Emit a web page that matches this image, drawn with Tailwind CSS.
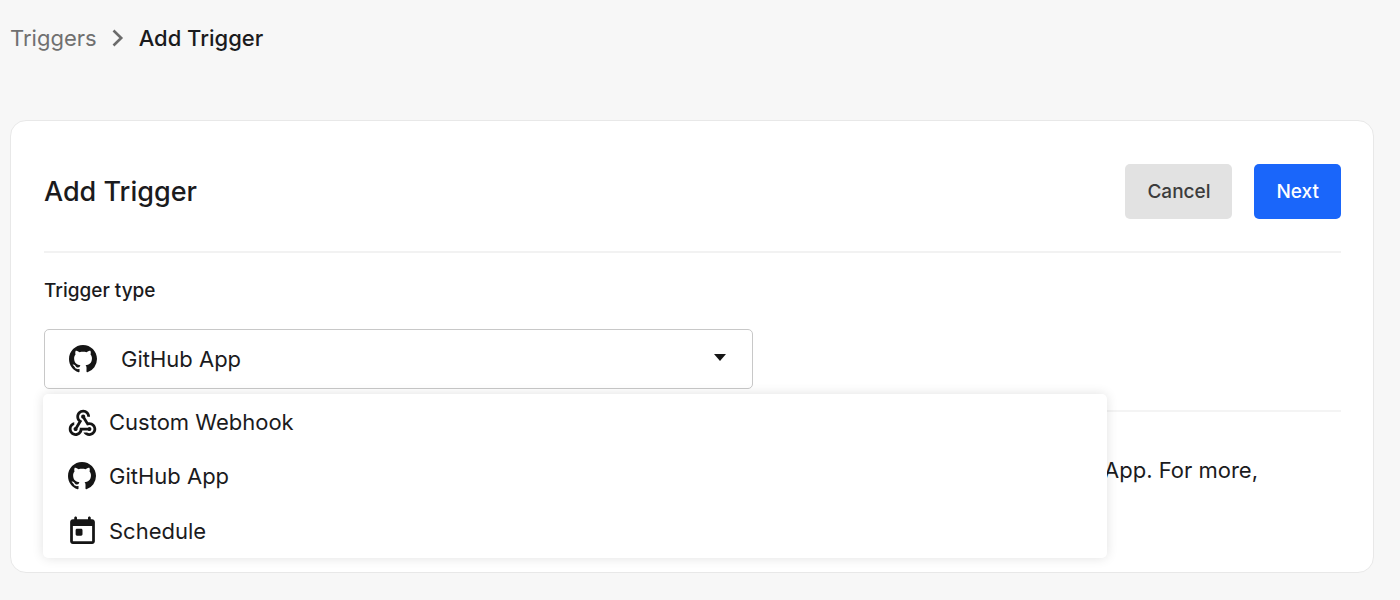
<!DOCTYPE html>
<html lang="en">
<head>
<meta charset="utf-8">
<meta name="viewport" content="width=device-width, initial-scale=1">
<title>Add Trigger</title>
<script src="https://cdn.jsdelivr.net/npm/@tailwindcss/browser@4"></script>
</head>
<body class="min-h-screen bg-[#f7f7f7] font-['Inter',sans-serif] text-[22px] leading-8 text-[#1b1b1d]">
<svg class="hidden" aria-hidden="true">
  <symbol id="github" viewBox="0 0 16 16"><path d="M8 0C3.58 0 0 3.58 0 8c0 3.54 2.29 6.53 5.47 7.59.4.07.55-.17.55-.38 0-.19-.01-.82-.01-1.49-2.01.37-2.53-.49-2.69-.94-.09-.23-.48-.94-.82-1.13-.28-.15-.68-.52-.01-.53.63-.01 1.08.58 1.23.82.72 1.21 1.87.87 2.33.66.07-.52.28-.87.51-1.07-1.78-.2-3.64-.89-3.64-3.95 0-.87.31-1.59.82-2.15-.08-.2-.36-1.02.08-2.12 0 0 .67-.21 2.2.82.64-.18 1.32-.27 2-.27s1.36.09 2 .27c1.53-1.04 2.2-.82 2.2-.82.44 1.1.16 1.92.08 2.12.51.56.82 1.27.82 2.15 0 3.07-1.87 3.75-3.65 3.95.29.25.54.73.54 1.48 0 1.07-.01 1.93-.01 2.2 0 .21.15.46.55.38A8.01 8.01 0 0 0 16 8c0-4.42-3.58-8-8-8z"/></symbol>
</svg>

<nav aria-label="Breadcrumb" class="px-[10px] pt-[22px]">
  <ol class="flex items-center">
    <li><a href="#" class="text-[#707070]">Triggers</a></li>
    <li aria-hidden="true" class="mx-[15px]"><svg class="h-5 w-3" viewBox="0 0 12 20" fill="none" stroke="#6b6b6b" stroke-width="2.6"><path d="M1.5 2.5 9.2 10 1.5 17.5"/></svg></li>
    <li aria-current="page" class="font-medium">Add Trigger</li>
  </ol>
</nav>

<main class="mt-[66px] mr-[26px] mb-7 ml-[10px] rounded-2xl border border-[#e8e8e8] bg-white px-8 pb-[86px] pl-[33px]">
  <header class="flex items-center justify-between border-b-2 border-[#f2f2f2] pt-[43px] pb-8">
    <h1 class="text-[27px] font-medium">Add Trigger</h1>
    <div class="flex gap-[22px]">
      <button type="button" class="h-[55px] rounded-[5px] bg-[#e2e2e2] px-[22px] text-[19px] font-medium text-[#3c3c3c]">Cancel</button>
      <button type="button" class="h-[55px] rounded-[5px] bg-[#1a66fa] px-[22px] text-[19px] font-medium text-white">Next</button>
    </div>
  </header>

  <section class="relative border-b-2 border-[#f4f4f4] pt-[22px] pb-[21px]">
    <label for="type" class="block text-[19px] font-medium">Trigger type</label>
    <div class="relative mt-[22px] max-w-[709px]">
      <select id="type" class="block h-[60px] w-full appearance-none rounded-[5px] border border-[#c8c8c8] bg-white pr-14 pl-[76px]">
        <option>GitHub App</option>
      </select>
      <svg class="pointer-events-none absolute top-4 left-[25px] h-7 w-7" fill="#151515" aria-hidden="true"><use href="#github"/></svg>
      <svg class="pointer-events-none absolute top-[25px] right-[27px] h-[7px] w-3" viewBox="0 0 12 7" fill="#151515" aria-hidden="true"><path d="M0 0h12L6 7z"/></svg>
    </div>
    <ul class="absolute top-[141px] -left-px z-10 w-[82%] min-w-72 rounded-[5px] bg-white shadow-[0_0_12px_rgba(0,0,0,0.12)]">
      <li><button type="button" class="flex h-[54px] w-full items-center gap-[10px] pt-0.5 pl-[23px] text-left">
        <svg class="mt-0.5 h-[33px] w-[33px]" viewBox="0 0 24 24" fill="#151515" aria-hidden="true"><path d="M10 15h5.88c.27-.31.67-.5 1.12-.5.83 0 1.5.67 1.5 1.5s-.67 1.5-1.5 1.5c-.44 0-.84-.19-1.12-.5H11.9c-.46 2.28-2.48 4-4.9 4-2.76 0-5-2.24-5-5 0-2.42 1.72-4.44 4-4.9v2.07C4.84 13.58 4 14.7 4 16c0 1.65 1.35 3 3 3s3-1.35 3-3v-1zm2.5-11c1.65 0 3 1.35 3 3h2c0-2.76-2.24-5-5-5s-5 2.24-5 5c0 1.43.6 2.71 1.55 3.62l-2.35 3.9c-.68.14-1.2.75-1.2 1.48 0 .83.67 1.5 1.5 1.5s1.5-.67 1.5-1.5c0-.16-.02-.31-.07-.45l3.38-5.63C10.49 9.61 9.5 8.42 9.5 7c0-1.65 1.35-3 3-3zm4.5 9c-.64 0-1.23.2-1.72.54l-3.05-5.07C11.53 8.35 11 7.74 11 7c0-.83.67-1.5 1.5-1.5S14 6.17 14 7c0 .15-.02.29-.06.43l2.19 3.65c.28-.05.57-.08.87-.08 2.76 0 5 2.24 5 5s-2.24 5-5 5c-1.85 0-3.47-1.01-4.33-2.5h2.67c.48.32 1.05.5 1.66.5 1.65 0 3-1.35 3-3s-1.35-3-3-3z"/></svg>
        Custom Webhook</button></li>
      <li><button type="button" class="flex h-[55px] w-full items-center gap-[10px] pl-[23px] text-left">
        <span class="w-[33px] pl-0.5"><svg class="h-7 w-7" fill="#151515" aria-hidden="true"><use href="#github"/></svg></span>
        GitHub App</button></li>
      <li><button type="button" class="flex h-[55px] w-full items-center gap-[10px] pl-[23px] text-left">
        <svg class="mt-0.5 h-[33px] w-[33px]" viewBox="0 0 24 24" fill="#151515" aria-hidden="true"><path d="M19 3h-1V2c0-.55-.45-1-1-1s-1 .45-1 1v1H8V2c0-.55-.45-1-1-1s-1 .45-1 1v1H5c-1.11 0-1.99.9-1.99 2L3 19c0 1.1.89 2 2 2h14c1.1 0 2-.9 2-2V5c0-1.1-.9-2-2-2zm0 16H5V8h14v11zM8 10h3c.55 0 1 .45 1 1v3c0 .55-.45 1-1 1H8c-.55 0-1-.45-1-1v-3c0-.55.45-1 1-1z"/></svg>
        Schedule</button></li>
    </ul>
  </section>

  <p class="pt-[42px] pr-[83px] text-right">App. For more,</p>
</main>
</body>
</html>
